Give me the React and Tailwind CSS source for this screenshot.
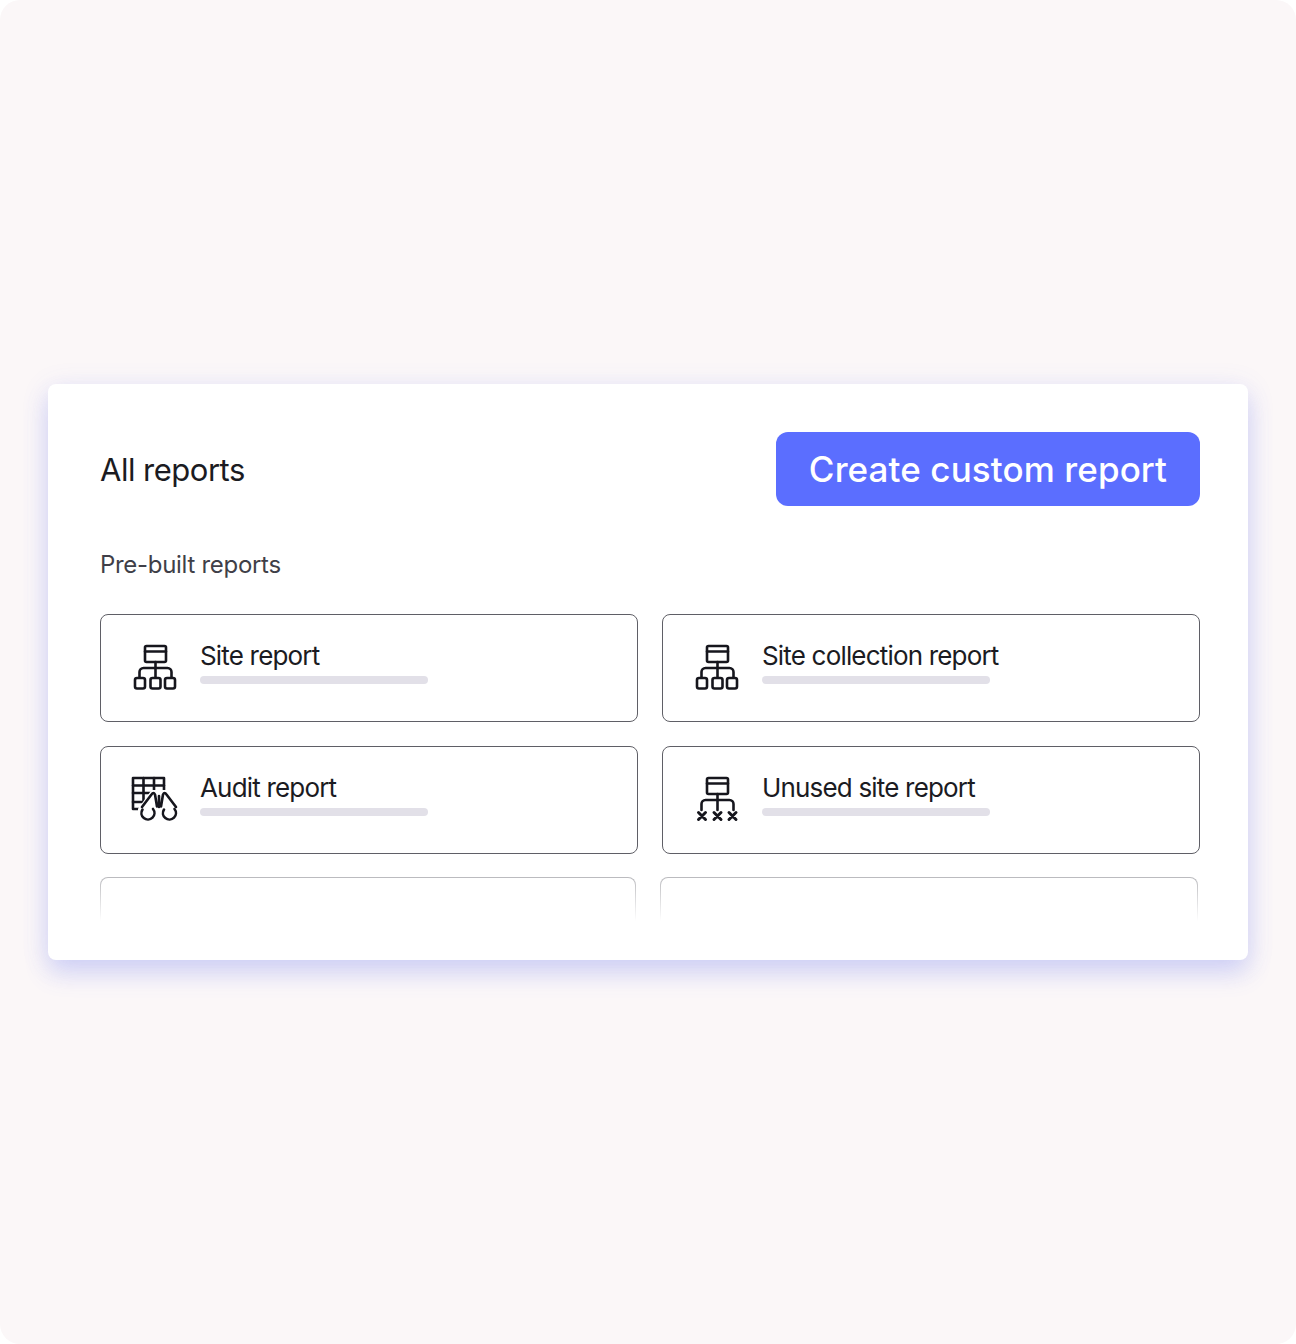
import React from 'react';

const SiteIcon = ({ unused }) => (
  <svg width="48" height="48" viewBox="0 0 48 48" fill="none" stroke="#16161d" strokeWidth="2.6" strokeLinejoin="round" strokeLinecap="round">
    <rect x="15" y="3" width="21" height="16" rx="1.5" />
    <path d="M15 8.5h21M25.5 19v16" />
    <path d="M9.5 35v-6a4 4 0 0 1 4-4h24a4 4 0 0 1 4 4v6" />
    {unused ? (
      <path d="M6.5 37.5l7 7M13.5 37.5l-7 7M22 37.5l7 7M29 37.5l-7 7M37 37.5l7 7M44 37.5l-7 7" strokeWidth="3" />
    ) : (
      <>
        <rect x="5" y="35" width="10" height="10.5" rx="2" fill="white" />
        <rect x="20.5" y="35" width="10" height="10.5" rx="2" fill="white" />
        <rect x="35" y="35" width="10" height="10.5" rx="2" fill="white" />
      </>
    )}
  </svg>
);

const AuditIcon = () => (
  <svg width="48" height="48" viewBox="0 0 48 48" fill="none" stroke="#16161d" strokeWidth="2.6" strokeLinejoin="round" strokeLinecap="round">
    <path d="M12 34H3V3h31v15" />
    <path d="M3 10.5h31M3 18h19M13.5 3v24M24 3v15M3 27h10" />
    {/* binoculars, white halo under the strokes */}
    <path d="M9 34l13-18h14l13 18v12H9z" fill="white" stroke="white" strokeWidth="2" />
    <path d="M12 32l9.500-12.500q2-3 3.500 0l2 12M46 32l-9.500-12.500q-2-3-3.500 0l-2 12M29 21v11" />
    <path d="M12.500 34.500a6.500 6.500 0 1 0 10.500 -0.500" />
    <path d="M34 34.500a6.500 6.500 0 1 0 10.500 -0.500" />
  </svg>
);

const ReportCard = ({ title, icon }) => (
  <div className="h-[108px] rounded-lg border border-[#5f5f66] bg-white flex items-start pl-[29px] pt-[28px]">
    <div className="w-[48px] h-[48px] mr-[22px] shrink-0">{icon}</div>
    <div className="flex flex-col -mt-[2px]">
      <span className="text-[26px] leading-[30px] text-[#1b1b22] tracking-[-0.82px]">{title}</span>
      <span className="mt-[5px] w-[228px] h-[8px] rounded-full bg-[#e2e0e8]" />
    </div>
  </div>
);

export default function App() {
  return (
    <div className="w-[1296px] h-[1344px] bg-[#fbf7f8] rounded-[20px] pt-[384px] pl-[48px] font-['Inter',sans-serif]">
      <div className="w-[1200px] h-[576px] bg-white rounded-lg pt-[48px] pl-[52px] pr-[48px] shadow-[0_14px_24px_rgba(92,107,240,0.2),0_4px_28px_rgba(92,107,240,0.13)]">
        <div className="flex items-center justify-between h-[74px]">
          <h1 className="text-[31px] leading-none text-[#1b1b22] tracking-[-0.5px]">All reports</h1>
          <button className="w-[424px] h-[74px] rounded-xl bg-[#5b6eff] text-white text-[35px] font-medium tracking-[0.1px]">
            Create custom report
          </button>
        </div>
        <p className="mt-[44px] text-[24px] leading-[30px] text-[#3f3f48] tracking-[-0.3px]">Pre-built reports</p>
        <div className="mt-[34px] grid grid-cols-2 gap-x-[24px] gap-y-[24px]">
          <ReportCard title="Site report" icon={<SiteIcon />} />
          <ReportCard title="Site collection report" icon={<SiteIcon />} />
          <ReportCard title="Audit report" icon={<AuditIcon />} />
          <ReportCard title="Unused site report" icon={<SiteIcon unused />} />
        </div>
        <div className="relative mt-[23px] h-[44px] flex gap-x-[24px]">
          <div className="w-[536px] rounded-t-lg border-x border-t border-[#8a8a90]" />
          <div className="w-[538px] rounded-t-lg border-x border-t border-[#8a8a90]" />
          <div className="absolute -inset-x-[2px] -top-[1px] bottom-0 bg-linear-to-b from-white/40 to-white" />
        </div>
      </div>
    </div>
  );
}
